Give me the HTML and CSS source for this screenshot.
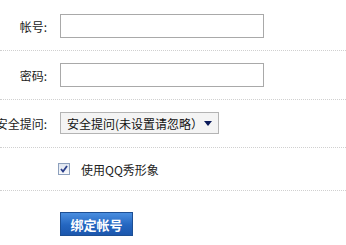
FILE: index.html
```html
<!DOCTYPE html>
<html lang="zh-CN">
<head>
<meta charset="utf-8">
<title>绑定帐号</title>
<link rel="stylesheet" href="styles.css">
</head>
<body>
<form class="bind-form">
  <div class="row row-first">
    <label class="label">帐号:</label>
    <input class="text-input" type="text">
  </div>
  <div class="row">
    <label class="label">密码:</label>
    <input class="text-input" type="password">
  </div>
  <div class="row row-select">
    <label class="label">安全提问:</label>
    <span class="select-wrap">
      <span class="select-text">安全提问(未设置请忽略）</span>
      <svg class="select-arrow" width="8" height="5" viewBox="0 0 8 5"><path d="M0 0H8L4 5Z" fill="#0a1a5a"/></svg>
    </span>
  </div>
  <div class="row row-check">
    <span class="label"></span>
    <span class="check-box">
      <svg width="10" height="10" viewBox="0 0 10 10"><path d="M2 5 L4 7.5 L8 2" fill="none" stroke="#2b3f8a" stroke-width="1.8"/></svg>
    </span>
    <span class="check-text">使用QQ秀形象</span>
  </div>
  <div class="row row-btn">
    <span class="label"></span>
    <button class="btn" type="button">绑定帐号</button>
  </div>
</form>
</body>
</html>
```
FILE: styles.css
```css
html, body {
  margin: 0;
  padding: 0;
  background: #fff;
}
body {
  font-family: "Noto Sans CJK SC", "Liberation Sans", sans-serif;
  font-size: 12px;
  color: #222;
  width: 346px;
  overflow: hidden;
}
.bind-form {
  display: flex;
  flex-direction: column;
}
.row {
  display: flex;
  align-items: center;
  border-bottom: 1px dotted #d0d0d0;
  padding: 12px 0;
  height: 24px;
}
.row-first {
  padding-top: 14px;
}
.row-select {
  padding: 12px 0 13px;
  height: 22px;
}
.row-check {
  padding: 0;
  height: 42px;
}
.row-btn {
  border-bottom: none;
  padding: 21px 0 10px;
  height: 24px;
}
.label {
  width: 47px;
  flex: none;
  display: flex;
  justify-content: flex-end;
  white-space: nowrap;
  margin-right: 13px;
  color: #222;
}
.text-input {
  box-sizing: border-box;
  width: 204px;
  height: 24px;
  margin: 0;
  border: 1px solid #a9a9a9;
  background: #fff;
  padding: 0 4px;
  outline: none;
}
.select-wrap {
  box-sizing: border-box;
  display: flex;
  align-items: center;
  width: 159px;
  height: 22px;
  border: 1px solid #b4b4b4;
  background: #f4f4f4;
  padding: 0 6px 0 6px;
}
.select-text {
  flex: 1;
  white-space: nowrap;
  color: #111;
}
.select-arrow {
  flex: none;
}
.check-box {
  box-sizing: border-box;
  flex: none;
  width: 12px;
  height: 12px;
  margin-left: -2px;
  border: 1px solid #8da0bd;
  background: linear-gradient(#dfe6f0, #f8f9fb);
  display: flex;
  align-items: center;
  justify-content: center;
}
.check-text {
  margin-left: 11px;
  color: #222;
}
.btn {
  box-sizing: border-box;
  width: 73px;
  height: 24px;
  margin: 0;
  padding: 0;
  border: 1px solid #1d4f94;
  background: linear-gradient(#4a8ee0, #2466c0 55%, #1c57ad);
  color: #fff;
  font-family: "Noto Sans CJK SC", sans-serif;
  font-size: 13px;
  font-weight: bold;
  letter-spacing: 0;
}
```
